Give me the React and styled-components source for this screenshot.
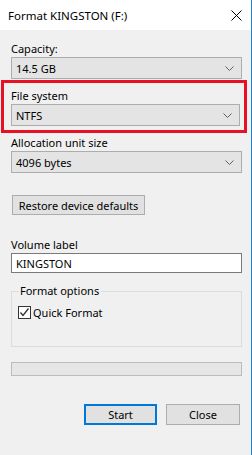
import React from "react";
import styled, { createGlobalStyle } from "styled-components";

const GlobalStyle = createGlobalStyle`
  html, body {
    margin: 0;
    padding: 0;
    background: #f0f0f0;
  }
  * {
    box-sizing: border-box;
  }
`;

const Window = styled.div`
  width: 252px;
  height: 455px;
  background: #f0f0f0;
  border-right: 1px solid #1883d7;
  font-family: "Noto Sans", "Open Sans", sans-serif;
  font-size: 11px;
  color: #000;
  display: flex;
  flex-direction: column;
`;

const TitleBar = styled.div`
  height: 30px;
  background: #fff;
  display: flex;
  align-items: center;
  justify-content: space-between;
  padding: 0 9px 0 8px;
  font-size: 11.5px;
`;

const Body = styled.div`
  flex: 1;
  padding: 11px 9px 0 11px;
  display: flex;
  flex-direction: column;
`;

const Label = styled.div`
  height: 16px;
  line-height: 16px;
  margin-top: ${(p) => p.$gap || 0}px;
  white-space: nowrap;
`;

const Combo = styled.div`
  height: 22px;
  background: #e4e4e4;
  border: 1px solid #adadad;
  display: flex;
  align-items: center;
  justify-content: space-between;
  padding: 0 7px 0 4px;
`;

const Highlight = styled.div`
  margin: 1px 0 0 -10px;
  width: 246px;
  border: 3px solid #e81123;
  padding: 5px 4px 4px 7px;
`;

const Button = styled.div`
  height: ${(p) => p.$h || 20}px;
  width: ${(p) => p.$w}px;
  background: #e1e1e1;
  border: ${(p) => (p.$default ? "2px solid #0078d7" : "1px solid #adadad")};
  display: flex;
  align-items: center;
  justify-content: center;
  white-space: nowrap;
`;

const RestoreRow = styled.div`
  margin: 22px 0 0 1px;
`;

const TextInput = styled.div`
  height: 20px;
  background: #fff;
  border: 1px solid #7a7a7a;
  display: flex;
  align-items: center;
  padding: 0 4px;
`;

const Group = styled.fieldset`
  margin: 10px 0 0;
  padding: 6px 6px 0 6px;
  height: 64px;
  border: 1px solid #dcdcdc;
  min-width: 0;
`;

const Legend = styled.legend`
  padding: 0 2px 0 1px;
  margin-left: 1px;
  line-height: 16px;
`;

const CheckRow = styled.label`
  display: flex;
  align-items: center;
  gap: 2px;
`;

const CheckBox = styled.span`
  width: 13px;
  height: 13px;
  border: 1px solid #333;
  background: #fff;
  display: flex;
  align-items: center;
  justify-content: center;
`;

const Progress = styled.div`
  margin-top: 15px;
  height: 14px;
  background: #e6e6e6;
  border: 1px solid #bcbcbc;
`;

const Footer = styled.div`
  margin-top: 28px;
  display: flex;
  justify-content: flex-end;
  gap: 9px;
  padding-right: 2px;
`;

function Chevron() {
  return (
    <svg width="9" height="5" viewBox="0 0 9 5">
      <path d="M0.5 0.5 L4.5 4.5 L8.5 0.5" fill="none" stroke="#606060" strokeWidth="1" />
    </svg>
  );
}

function CloseIcon() {
  return (
    <svg width="11" height="11" viewBox="0 0 11 11">
      <path d="M0.5 0.5 L10.5 10.5 M10.5 0.5 L0.5 10.5" stroke="#000" strokeWidth="1" />
    </svg>
  );
}

function Check() {
  return (
    <svg width="11" height="11" viewBox="0 0 11 11">
      <path d="M1.5 5.5 L4 8.5 L9.5 1.5" fill="none" stroke="#333" strokeWidth="1.3" />
    </svg>
  );
}

export default function App() {
  return (
    <>
      <GlobalStyle />
      <Window>
        <TitleBar>
          <span>Format KINGSTON (F:)</span>
          <CloseIcon />
        </TitleBar>
        <Body>
          <Label>Capacity:</Label>
          <Combo>
            <span>14.5 GB</span>
            <Chevron />
          </Combo>
          <Highlight>
            <Label>File system</Label>
            <Combo>
              <span>NTFS</span>
              <Chevron />
            </Combo>
          </Highlight>
          <Label $gap={2}>Allocation unit size</Label>
          <Combo>
            <span>4096 bytes</span>
            <Chevron />
          </Combo>
          <RestoreRow>
            <Button $w={133}>Restore device defaults</Button>
          </RestoreRow>
          <Label $gap={22}>Volume label</Label>
          <TextInput>KINGSTON</TextInput>
          <Group>
            <Legend>Format options</Legend>
            <CheckRow>
              <CheckBox>
                <Check />
              </CheckBox>
              Quick Format
            </CheckRow>
          </Group>
          <Progress />
          <Footer>
            <Button $default $w={73} $h={21}>Start</Button>
            <Button $w={74} $h={21}>Close</Button>
          </Footer>
        </Body>
      </Window>
    </>
  );
}
